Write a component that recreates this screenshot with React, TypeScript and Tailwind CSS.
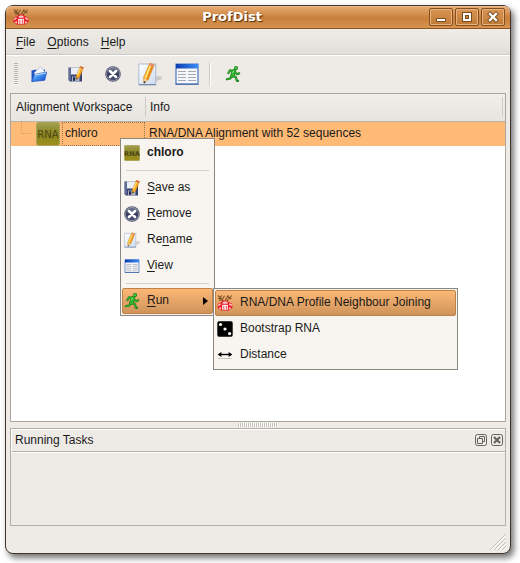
import { FC, ReactNode } from "react";

type IconProps = {
  className?: string;
};

const OpenIcon: FC<IconProps> = ({ className = "size-4" }) => (
  <svg viewBox="0 0 16 16" className={className} aria-hidden="true">
    <defs>
      <linearGradient id="folder" x1="0" y1="0" x2="1" y2="1">
        <stop offset="0" stopColor="#a9d8fa" />
        <stop offset=".5" stopColor="#3b8df0" />
        <stop offset="1" stopColor="#1740b8" />
      </linearGradient>
    </defs>
    <path d="M.5 4.5 5 3.5l1 1 8-1v10l-13.5 2z" fill="#2056c4" />
    <path d="M3.4 6.5 9.5.6l4.5 5.4v4H3.4z" fill="#f4f7fc" stroke="#a4b0c8" strokeWidth=".7" />
    <path d="M3.4 8.4 15.7 6l-2 8.3L.8 15.6z" fill="url(#folder)" stroke="#1d4cc0" strokeWidth=".7" />
    <path d="M4 9 15 6.9" stroke="#d6efff" strokeWidth=".9" />
  </svg>
);

const SaveIcon: FC<IconProps> = ({ className = "size-4" }) => (
  <svg viewBox="0 0 16 16" className={className} aria-hidden="true">
    <path d="M.5 1.5H14v14H2L.5 14z" fill="#36436c" />
    <path d="M1.2 2h1.6v12.5H2l-.8-.8z" fill="#6877a8" />
    <path d="M3 1.5h9v7H3z" fill="#eceff7" />
    <path d="M4 10.5h7.5v5H4z" fill="#aab2c8" />
    <path d="M5 11.2h2.2v3.6H5z" fill="#20294a" />
    <path d="m12.4.3 3.2 1.2-3.9 9.3-3.1 2.6-.2-4z" fill="#f9a81c" stroke="#c87710" strokeWidth=".4" />
    <path d="M12.9 1.4 9.4 9.2" stroke="#ffe27c" strokeWidth="1.1" />
    <path d="m12.4.3 3.2 1.2-.7 1.6-3.2-1.3z" fill="#dd6a48" />
    <path d="m8.4 11.6.1 1.8 1.3-1.1z" fill="#222" />
  </svg>
);

const RemoveIcon: FC<IconProps> = ({ className = "size-4" }) => (
  <svg viewBox="0 0 16 16" className={className} aria-hidden="true">
    <defs>
      <linearGradient id="disc" x1="0" y1="0" x2="0" y2="1">
        <stop offset="0" stopColor="#777d98" />
        <stop offset=".55" stopColor="#353b5c" />
        <stop offset="1" stopColor="#4f5577" />
      </linearGradient>
    </defs>
    <circle cx="8" cy="8" r="7.8" fill="#55586e" />
    <circle cx="8" cy="8" r="7" fill="#a2a6b9" />
    <circle cx="8" cy="8" r="6.4" fill="url(#disc)" />
    <path d="m5 5 6 6m0-6-6 6" stroke="#fff" strokeWidth="2.5" strokeLinecap="round" />
  </svg>
);

const RenameIcon: FC<IconProps> = ({ className = "size-4" }) => (
  <svg viewBox="0 0 24 24" className={className} aria-hidden="true">
    <defs>
      <linearGradient id="paper" x1="0" y1="0" x2="1" y2="1">
        <stop offset="0" stopColor="#ffffff" />
        <stop offset="1" stopColor="#ccdbee" />
      </linearGradient>
    </defs>
    <path d="m9 20 11-6 4 .5-1 3-12 4z" fill="#777" opacity=".3" />
    <path d="M.8 2h17v21H.8z" fill="url(#paper)" stroke="#9caec9" strokeWidth=".8" />
    <path d="M1 22.6h16.8" stroke="#6b83ad" />
    <path d="m11.7 1.2 4.6 1.5-6 15-4.4 3.8-.4-5.8z" fill="#f8ad1d" stroke="#c8801c" strokeWidth=".5" />
    <path d="m12.6 3.2-5.2 13" stroke="#ffe78b" strokeWidth="1.4" />
    <path d="m15 3-6 15" stroke="#e17c16" strokeWidth="1.2" />
    <path d="m11.7 1.2 4.6 1.5-.8 2.2-4.6-1.7z" fill="#e98d72" />
    <path d="m5.6 16.6.3 4.9 4-3.6z" fill="#eed1a3" />
    <path d="m5.8 19.2.1 2.3 2-1.8z" fill="#222" />
  </svg>
);

const ViewIcon: FC<IconProps> = ({ className = "size-4" }) => (
  <svg viewBox="0 0 24 22" className={className} aria-hidden="true">
    <defs>
      <linearGradient id="caption" x1="0" y1="0" x2="1" y2="0">
        <stop offset="0" stopColor="#0c3cae" />
        <stop offset="1" stopColor="#3d8df5" />
      </linearGradient>
    </defs>
    <path d="M1 1h22v20H1z" fill="#f6f8fc" stroke="#4b78c4" strokeWidth="1.2" />
    <path d="M1 1h22v4.5H1z" fill="url(#caption)" />
    <path d="M.6 21.2h22.8" stroke="#3a5c9c" strokeWidth="1" />
    <path
      d="M3 8.5h8M3 11.5h8M3 14.5h8M3 17.5h8M13 8.5h8M13 11.5h8M13 14.5h8M13 17.5h8"
      stroke="#a3a8b2"
      strokeWidth="1.2"
    />
  </svg>
);

const RunIcon: FC<IconProps> = ({ className = "size-4" }) => (
  <svg viewBox="0 0 16 16" className={className} aria-hidden="true">
    <g fill="none" stroke="#1b7a1e" strokeLinecap="round" strokeLinejoin="round">
      <path d="M9 5.2 7.4 9.5" strokeWidth="4.4" />
      <path d="M9 5 5 4.4 3.4 7M10 5.8l1.8 2.4 2.4-.8M7.5 9.5l3.4 1.8.9 3.4 1.2.1M7 9.6l-1.6 2.8-3.6.8" strokeWidth="2.2" />
    </g>
    <circle cx="11" cy="2.1" r="2.1" fill="#1b7a1e" />
    <g fill="none" stroke="#33b42f" strokeLinecap="round" strokeLinejoin="round">
      <path d="M9 5.2 7.4 9.5" strokeWidth="3" />
      <path d="M9 5 5 4.4 3.4 7M10 5.8l1.8 2.4 2.4-.8M7.5 9.5l3.4 1.8.9 3.4M7 9.6l-1.6 2.8-3.6.8" strokeWidth="1.1" />
    </g>
    <circle cx="10.8" cy="1.9" r="1.4" fill="#44c63f" />
    <path d="m8.5 4.7-1 2.6" stroke="#86e67e" strokeWidth="1" />
  </svg>
);

const ProfileIcon: FC<IconProps> = ({ className = "size-4" }) => (
  <svg viewBox="0 0 16 16" className={className} aria-hidden="true">
    <path
      d="M1 .5 8 8M4.8.5 3.2 2.8M7.5.8 5 4.8M8 5.5 11.5.5M10 .8l2.5 2M14.8.5 8 8M1 3.5l2.5-.3M12.5 3.5h2M2 5.3l3-.5"
      fill="none"
      stroke="#7a5226"
      strokeWidth="1.1"
    />
    <path d="M4 7.2 6 5.5h4l2 1.7 3 1.3.5 4.2-3.5 2.8H4L.5 13l.3-4.2z" fill="#ea1c24" />
    <path d="m1 9.3 2.4-1 .6 1.4-2.6 1.6zM15 9l-2.6-.8-.6 1.6 2.9 1.4zM1.6 13l2-1 .8 2-1.2.8zM14.3 13l-2-1-.7 2 1.2.8z" fill="#fbb6b6" />
    <path d="M5.6 7.4 7 6.4h2.3l1.3 1v1.4h-5z" fill="#fbd0d0" />
    <path d="M5.2 9.8h5.6v5H5.2z" fill="#fff" />
    <path d="M6.2 10.8h1.2v4H6.2zM8.8 10.8H10v4H8.8z" fill="#f2666a" />
  </svg>
);

const DiceIcon: FC<IconProps> = ({ className = "size-4" }) => (
  <svg viewBox="0 0 16 16" className={className} aria-hidden="true">
    <rect x=".3" y=".3" width="15.4" height="15.4" rx="1.6" fill="#000" />
    <circle cx="3.5" cy="3.5" r="1.6" fill="#fff" />
    <circle cx="8" cy="8" r="1.6" fill="#fff" />
    <circle cx="12.6" cy="12.6" r="1.6" fill="#fff" />
  </svg>
);

const DistanceIcon: FC<IconProps> = ({ className = "size-4" }) => (
  <svg viewBox="0 0 16 16" className={className} aria-hidden="true">
    <path d="M2 7.5h12" stroke="#000" strokeWidth="1.4" />
    <path d="M.6 7.5 4.4 5v5zM15.4 7.5 11.6 5v5z" fill="#000" />
    <path d="M1 11.5h14" stroke="#c9c9bf" />
  </svg>
);

const RnaIcon: FC<IconProps> = ({ className = "size-4" }) => (
  <svg viewBox="0 0 24 24" className={className} aria-hidden="true">
    <defs>
      <linearGradient id="rna" x1="0" y1="0" x2="0" y2="1">
        <stop offset="0" stopColor="#a3a052" />
        <stop offset=".5" stopColor="#8a8520" />
        <stop offset="1" stopColor="#a0901c" />
      </linearGradient>
    </defs>
    <rect x=".5" y=".5" width="23" height="23" rx="2" fill="url(#rna)" stroke="#aaa35c" />
    <text
      x="12"
      y="16"
      textAnchor="middle"
      fontFamily="DejaVu Sans, sans-serif"
      fontSize="10"
      fill="#4c4719"
    >
      RNA
    </text>
  </svg>
);

type TitleButtonProps = {
  label: string;
  children: ReactNode;
};

const TitleButton: FC<TitleButtonProps> = ({ label, children }) => (
  <button
    type="button"
    aria-label={label}
    className="flex h-[18px] w-6 items-center justify-center rounded-xs border border-[#84501f] bg-linear-to-b from-[#d89554] to-[#c07a36] inset-ring inset-ring-[#e9b27c]"
  >
    <svg viewBox="0 0 12 12" className="size-3">
      {children}
    </svg>
  </button>
);

const TitleBar: FC = () => (
  <header className="flex h-[23px] items-center gap-[2px] rounded-t-md border-b border-[#8b5523] bg-linear-to-b from-[#e8ad74] via-[#c87f3a] via-55% to-[#d59450] pr-[5px] pl-[7px] inset-shadow-[0_1px_0_#efbe90]">
    <ProfileIcon />
    <h1 className="flex-1 pl-[6px] text-center font-['DejaVu_Sans',sans-serif] text-[13px] leading-4 font-bold text-white text-shadow-[1px_1px_1px_#4a2a0c]">
      ProfDist
    </h1>
    <TitleButton label="Minimize">
      <path d="M1.5 7.5h9v3h-9z" fill="#fff" stroke="#7a4a1e" />
    </TitleButton>
    <TitleButton label="Maximize">
      <path d="M3 3h6v6H3z" fill="none" stroke="#7a4a1e" strokeWidth="4" />
      <path d="M3 3h6v6H3z" fill="none" stroke="#fff" strokeWidth="2" />
    </TitleButton>
    <TitleButton label="Close">
      <path d="m3 3 6 6m0-6-6 6" stroke="#7a4a1e" strokeWidth="4.2" strokeLinecap="square" />
      <path d="m3 3 6 6m0-6-6 6" stroke="#fff" strokeWidth="2.4" strokeLinecap="square" />
    </TitleButton>
  </header>
);

type MnemonicProps = {
  text: string;
  index?: number;
};

// Underlines the shortcut letter of a menu label
const Mnemonic: FC<MnemonicProps> = ({ text, index = 0 }) => (
  <span>
    {text.slice(0, index)}
    <span className="underline decoration-1 underline-offset-2">{text[index]}</span>
    {text.slice(index + 1)}
  </span>
);

const MenuBar: FC = () => (
  <nav className="flex h-[26px] items-center gap-3 border-b border-[#cfcbc5] bg-linear-to-b from-[#efebe7] to-[#e2dfda] px-[10px]">
    {["File", "Options", "Help"].map((name) => (
      <button type="button" key={name}>
        <Mnemonic text={name} />
      </button>
    ))}
  </nav>
);

const tools = [
  { label: "Open", icon: <OpenIcon /> },
  { label: "Save as", icon: <SaveIcon /> },
  { label: "Remove", icon: <RemoveIcon /> },
  { label: "Rename", icon: <RenameIcon className="size-6" /> },
  { label: "View", icon: <ViewIcon className="h-[22px] w-6" /> },
];

const ToolBar: FC = () => (
  <div role="toolbar" className="flex h-[38px] items-center border-t border-white px-1 pb-[2px]">
    <div className="mr-[2px] ml-1 h-[22px] w-1 bg-[repeating-linear-gradient(#b5b1aa_0_1px,#f8f6f3_1px_2px)]" />
    {tools.map(({ label, icon }) => (
      <button
        type="button"
        key={label}
        aria-label={label}
        className="flex h-8 w-[37px] items-center justify-center"
      >
        {icon}
      </button>
    ))}
    <div className="mx-1 h-6 w-px bg-[#cfcbc5] shadow-[1px_0_0_#fff]" />
    <button type="button" aria-label="Run" className="flex h-8 w-[37px] items-center justify-center">
      <RunIcon />
    </button>
  </div>
);

const actions = [
  { label: "Save as", key: 0, icon: <SaveIcon /> },
  { label: "Remove", key: 0, icon: <RemoveIcon /> },
  { label: "Rename", key: 2, icon: <RenameIcon /> },
  { label: "View", key: 0, icon: <ViewIcon className="h-[14px] w-4" /> },
];

const runs = [
  { label: "RNA/DNA Profile Neighbour Joining", icon: <ProfileIcon />, active: true },
  { label: "Bootstrap RNA", icon: <DiceIcon />, active: false },
  { label: "Distance", icon: <DistanceIcon />, active: false },
];

const RunMenu: FC = () => (
  <div
    role="menu"
    className="absolute top-0 left-[91px] w-[245px] border border-[#8b867f] bg-[#f8f5f1] p-px"
  >
    {runs.map(({ label, icon, active }) => (
      <button
        type="button"
        role="menuitem"
        key={label}
        className={
          active
            ? "flex h-[26px] w-full items-center gap-[7px] rounded-xs border border-[#bd814a] bg-linear-to-b from-[#fcb774] to-[#cf945b] px-px"
            : "flex h-[26px] w-full items-center gap-[7px] border border-transparent px-px"
        }
      >
        {icon}
        <span className="pb-[2px]">{label}</span>
      </button>
    ))}
  </div>
);

const ContextMenu: FC = () => (
  <div
    role="menu"
    className="absolute top-[44px] left-[109px] w-[95px] border border-[#8b867f] bg-[#f8f5f1] p-px"
  >
    <div className="flex h-[25px] items-center gap-[7px] px-[2px] font-bold">
      <RnaIcon />
      <span className="pb-[2px]">chloro</span>
    </div>
    <hr className="mx-1 mt-[5px] mb-1 border-[#d3cfc8]" />
    {actions.map(({ label, key, icon }) => (
      <button
        type="button"
        role="menuitem"
        key={label}
        className="flex h-[26px] w-full items-center gap-[7px] px-[2px]"
      >
        {icon}
        <span className="pb-[2px]">
          <Mnemonic text={label} index={key} />
        </span>
      </button>
    ))}
    <hr className="mx-1 my-1 border-[#d3cfc8]" />
    <div className="relative">
      <button
        type="button"
        role="menuitem"
        aria-haspopup="menu"
        className="flex h-[26px] w-full items-center gap-[7px] rounded-xs border border-[#bd814a] bg-linear-to-b from-[#fcb774] to-[#cf945b] px-px"
      >
        <RunIcon />
        <span className="pb-[2px]">
          <Mnemonic text="Run" />
        </span>
        <svg viewBox="0 0 5 8" className="mr-[3px] ml-auto h-2 w-[5px]" aria-hidden="true">
          <path d="M0 0v8l5-4z" fill="#000" />
        </svg>
      </button>
      <RunMenu />
    </div>
  </div>
);

const Workspace: FC = () => (
  <main className="relative flex-1 border border-[#aaa69f] bg-white">
    <table className="w-full table-fixed border-collapse text-left">
      <thead className="bg-linear-to-b from-[#f1eeea] to-[#e8e4df]">
        <tr className="h-[27px]">
          <th scope="col" className="w-[134px] border-b border-[#b8b4ad] px-[5px] py-0 font-normal">
            Alignment Workspace
          </th>
          <th scope="col" className="border-b border-[#b8b4ad] p-0 font-normal">
            <div className="mr-[2px] border-x border-[#cfcbc5] px-1 py-[2px]">Info</div>
          </th>
        </tr>
      </thead>
      <tbody>
        <tr className="h-6 bg-[#ffbb76]">
          <td className="p-0">
            <div className="flex h-6 pl-[10px]">
              <div className="mr-1 h-3 w-[11px] border-b border-l border-dotted border-[#d99c62]" />
              <RnaIcon className="size-6" />
              <div className="ml-[2px] flex flex-1 items-center border border-dotted border-[#9c7146] px-[2px] pb-[2px]">
                chloro
              </div>
            </div>
          </td>
          <td className="px-1 pt-0 pb-[2px]">RNA/DNA Alignment with 52 sequences</td>
        </tr>
      </tbody>
    </table>
    <ContextMenu />
  </main>
);

const TasksPanel: FC = () => (
  <section className="h-[98px] border border-[#b3afa8]">
    <div className="flex h-[23px] items-center gap-1 border-t border-b border-l border-t-white border-b-[#b3afa8] border-l-white pr-[2px] pb-[2px] pl-[3px]">
      <h2 className="flex-1">Running Tasks</h2>
      <button type="button" aria-label="Float">
        <svg viewBox="0 0 12 12" className="size-3" fill="none" stroke="#66635e">
          <rect x=".5" y=".5" width="11" height="11" rx="2" />
          <path d="M4.5 4.5v-2h5v5h-2M2.5 4.5h5v5h-5z" />
        </svg>
      </button>
      <button type="button" aria-label="Close panel">
        <svg viewBox="0 0 12 12" className="size-3" fill="none" stroke="#66635e">
          <rect x=".5" y=".5" width="11" height="11" rx="2" />
          <path d="m3 3 6 6m0-6-6 6" strokeWidth="2.2" />
        </svg>
      </button>
    </div>
    <div className="h-px bg-white" />
  </section>
);

const App: FC = () => {
  return (
    <div className="flex min-h-screen bg-white pt-[5px] pr-[9px] pb-[9px] pl-[5px] font-['Liberation_Sans',Arial,sans-serif] text-xs leading-4 text-[#1a1a1a]">
      <div className="flex flex-1 flex-col rounded-lg border border-[#3f352c] bg-[#eeebe7] shadow-[3px_4px_6px_rgba(0,0,0,0.55)]">
        <TitleBar />
        <MenuBar />
        <ToolBar />
        <div className="flex flex-1 flex-col px-1">
          <Workspace />
          <div className="flex h-[6px] items-center justify-center">
            <div className="h-1 w-10 bg-[repeating-linear-gradient(90deg,#c4c0ba_0_1px,#fff_1px_2px)]" />
          </div>
          <TasksPanel />
        </div>
        <footer className="flex h-[27px] items-end justify-end px-1 pb-[3px]">
          <svg viewBox="0 0 16 16" className="size-4" fill="none" aria-hidden="true">
            <path d="M0 16 16 0M4 16 16 4M8 16l8-8M12 16l4-4" stroke="#c3bfb8" />
            <path d="M1.4 16 16 1.4M5.4 16 16 5.4M9.4 16 16 9.4M13.4 16l2.6-2.6" stroke="#fff" />
          </svg>
        </footer>
      </div>
    </div>
  );
};

export default App;
